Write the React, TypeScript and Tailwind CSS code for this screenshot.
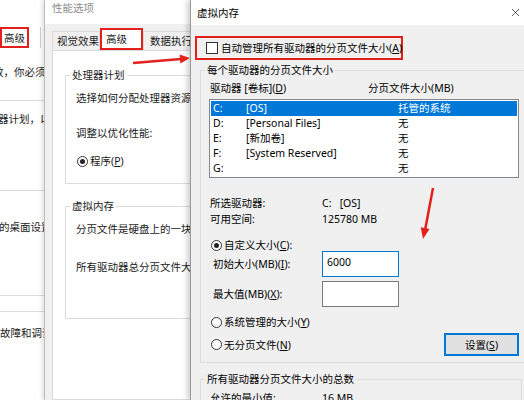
import React from 'react';
import { X } from 'lucide-react';

const Radio = ({ checked }: { checked?: boolean }) => (
  <span className="w-[11px] h-[11px] rounded-full border border-[#333] bg-white flex items-center justify-center shrink-0">
    {checked && <span className="w-[5px] h-[5px] rounded-full bg-[#222]" />}
  </span>
);

const drives = [
  { d: 'C:', label: '[OS]', size: '托管的系统', selected: true },
  { d: 'D:', label: '[Personal Files]', size: '无' },
  { d: 'E:', label: '[新加卷]', size: '无' },
  { d: 'F:', label: '[System Reserved]', size: '无' },
  { d: 'G:', label: '', size: '无' },
];

const LeftWindow = () => (
  <div className="w-[44px] shrink-0 bg-white overflow-hidden flex flex-col text-[#1a1a1a] whitespace-nowrap">
    <div className="h-[27px] shrink-0" />
    <div className="h-[21px] shrink-0 flex items-stretch">
      <div className="w-[29px] shrink-0 border-2 border-[#e3201b] flex items-center pl-[2px] leading-[14px]">高级</div>
      <div className="w-[11px] shrink-0" />
      <div className="w-px shrink-0 bg-[#d0d0d0]" />
    </div>
    <div className="shrink-0 mt-[17px] h-[14px] leading-[14px] ml-[-7px]">效，你必须</div>
    <div className="shrink-0 mt-[21px] h-px bg-[#dcdcdc]" />
    <div className="shrink-0 mt-[11px] h-[14px] leading-[14px] ml-[-2px]">器计划，以</div>
    <div className="shrink-0 mt-[64px] h-px bg-[#dcdcdc]" />
    <div className="shrink-0 mt-[29px] h-[14px] leading-[14px] ml-[-1px]">的桌面设置</div>
    <div className="shrink-0 mt-[61px] h-px bg-[#dcdcdc]" />
    <div className="shrink-0 mt-[15px] h-px bg-[#dcdcdc]" />
    <div className="shrink-0 mt-[14px] h-[14px] leading-[14px]">故障和调试</div>
  </div>
);

const MiddleWindow = () => (
  <div className="w-[146px] shrink-0 overflow-hidden bg-[#f0f0f0] border-l border-[#bdbdbd] shadow-[-2px_0_4px_rgba(0,0,0,0.12)] relative z-[5] flex flex-col text-[#1a1a1a] whitespace-nowrap">
    <div className="h-[24px] shrink-0 bg-white pl-[7px] leading-[16px] text-[#8c8c8c]">性能选项</div>
    <div className="h-[26px] shrink-0 flex items-end pl-[7px]">
      <div className="w-[48px] h-[19px] shrink-0 border border-b-0 border-[#d9d9d9] flex items-center pl-[4px] leading-[14px]">视觉效果</div>
      <div className="w-[43px] h-[22px] shrink-0 bg-white border-2 border-[#e3201b] flex items-center pl-[4px] leading-[14px]">高级</div>
      <div className="w-[66px] h-[19px] shrink-0 border border-b-0 border-[#d9d9d9] flex items-center pl-[6px] leading-[14px]">数据执行保护</div>
    </div>
    <div className="flex-1 ml-[7px] w-[220px] shrink-0 bg-white border border-[#d9d9d9] pl-[12px]">
      <fieldset className="mt-[17px] w-[200px] border border-[#dcdcdc] p-0">
        <legend className="ml-[4px] px-[2px] leading-[14px]">处理器计划</legend>
        <div className="pl-[10px] pb-[15px]">
          <div className="mt-[9px] leading-[14px]">选择如何分配处理器资源</div>
          <div className="mt-[21px] leading-[14px]">调整以优化性能:</div>
          <div className="mt-[14px] h-[14px] flex items-center gap-[2px] pl-[1px]">
            <Radio checked />
            <span className="leading-[14px]">程序(<u>P</u>)</span>
          </div>
        </div>
      </fieldset>
      <fieldset className="mt-[15px] w-[200px] border border-[#dcdcdc] p-0">
        <legend className="ml-[4px] px-[2px] leading-[14px]">虚拟内存</legend>
        <div className="pl-[10px] pb-[44px]">
          <div className="mt-[9px] leading-[14px]">分页文件是硬盘上的一块区域</div>
          <div className="mt-[24px] leading-[14px]">所有驱动器总分页文件大小</div>
        </div>
      </fieldset>
    </div>
  </div>
);

const VirtualMemory = () => (
  <div className="w-[334px] shrink-0 flex flex-col bg-[#f0f0f0] border-l border-[#9a9a9a] shadow-[-3px_0_5px_rgba(0,0,0,0.18)] relative z-10 text-black whitespace-nowrap">
    <div className="h-[25px] shrink-0 bg-white flex items-center justify-between pl-[6px] pr-[2px]">
      <span className="leading-[14px]">虚拟内存</span>
      <X className="w-[13px] h-[13px] text-[#222]" strokeWidth={1.3} />
    </div>

    <div className="shrink-0 mt-[11px] ml-[4px] w-[208px] h-[24px] border-2 border-[#e3201b] flex items-center pl-[9px] gap-[3px]">
      <span className="w-[12px] h-[12px] border border-[#333] bg-white shrink-0" />
      <span className="leading-[14px]">自动管理所有驱动器的分页文件大小(<u>A</u>)</span>
    </div>

    <fieldset className="shrink-0 mt-[3px] ml-[9px] w-[322px] border border-[#dcdcdc] p-0">
      <legend className="ml-[4px] px-[2px] leading-[14px]">每个驱动器的分页文件大小</legend>
      <div className="pl-[9px] pr-[7px] pb-[6px]">
        <div className="mt-[4px] h-[14px] flex leading-[14px]">
          <span className="w-[158px]">驱动器 [卷标](<u>D</u>)</span>
          <span>分页文件大小(MB)</span>
        </div>
        <div className="mt-[4px] -ml-[1px] w-[310px] h-[79px] border border-[#828790] bg-white p-[1px]">
          {drives.map((r) => (
            <div
              key={r.d}
              className={r.selected ? 'h-[15px] flex items-center pl-[2px] bg-[#0078d7] text-white' : 'h-[15px] flex items-center pl-[2px]'}
            >
              <span className="w-[33px] leading-[15px]">{r.d}</span>
              <span className="w-[152px] leading-[15px]">{r.label}</span>
              <span className="leading-[15px]">{r.size}</span>
            </div>
          ))}
        </div>

        <div className="mt-[17px] h-[16px] flex items-center leading-[14px]">
          <span className="w-[112px]">所选驱动器:</span>
          <span>C:&nbsp;&nbsp;&nbsp;[OS]</span>
        </div>
        <div className="h-[16px] flex items-center leading-[14px]">
          <span className="w-[112px]">可用空间:</span>
          <span>125780 MB</span>
        </div>

        <div className="mt-[12px] h-[12px] flex items-center gap-[2px] pl-[1px]">
          <Radio checked />
          <span className="leading-[14px]">自定义大小(<u>C</u>):</span>
        </div>
        <div className="h-[26px] flex items-center">
          <span className="w-[112px] pl-[3px] leading-[14px]">初始大小(MB)(<u>I</u>):</span>
          <div className="w-[77px] h-[26px] border border-[#0078d7] bg-white pl-[4px] pt-[3px] leading-[14px]">6000</div>
        </div>
        <div className="mt-[4px] h-[26px] flex items-center">
          <span className="w-[112px] pl-[3px] leading-[14px]">最大值(MB)(<u>X</u>):</span>
          <div className="w-[77px] h-[26px] border border-[#7a7a7a] bg-white" />
        </div>

        <div className="mt-[8px] h-[14px] flex items-center gap-[2px] pl-[1px]">
          <Radio />
          <span className="leading-[14px]">系统管理的大小(<u>Y</u>)</span>
        </div>
        <div className="mt-[4px] h-[23px] flex items-center justify-between">
          <div className="flex items-center gap-[2px] pl-[1px]">
            <Radio />
            <span className="leading-[14px]">无分页文件(<u>N</u>)</span>
          </div>
          <div className="w-[75px] h-[23px] border-2 border-[#0078d7] bg-[#e1e1e1] flex items-center justify-center leading-[14px]">
            设置(<u>S</u>)
          </div>
        </div>
      </div>
    </fieldset>

    <fieldset className="shrink-0 mt-[9px] ml-[9px] w-[322px] border border-[#dcdcdc] p-0">
      <legend className="ml-[4px] px-[2px] leading-[14px]">所有驱动器分页文件大小的总数</legend>
      <div className="pl-[9px] pb-[6px]">
        <div className="mt-[4px] h-[16px] flex items-center leading-[14px]">
          <span className="w-[112px]">允许的最小值:</span>
          <span>16 MB</span>
        </div>
        <div className="h-[16px] flex items-center leading-[14px]">
          <span className="w-[112px]">推荐:</span>
          <span>3023 MB</span>
        </div>
      </div>
    </fieldset>
  </div>
);

export default function App() {
  return (
    <div className="w-[524px] h-[400px] overflow-hidden relative flex bg-white text-[10.5px] font-['Noto_Sans','Noto_Sans_CJK_SC',sans-serif]">
      <LeftWindow />
      <MiddleWindow />
      <VirtualMemory />
      <svg className="absolute inset-0 pointer-events-none z-20" width="524" height="400" viewBox="0 0 524 400">
        <line x1="133" y1="63" x2="181" y2="58.9" stroke="#e3201b" strokeWidth="2.5" />
        <polygon points="190,58 180.4,63.4 179.6,54.4" fill="#e3201b" />
        <line x1="433" y1="188" x2="425.3" y2="229" stroke="#e3201b" strokeWidth="2.5" />
        <polygon points="423,239 429.5,229.1 420.7,227.3" fill="#e3201b" />
      </svg>
    </div>
  );
}
